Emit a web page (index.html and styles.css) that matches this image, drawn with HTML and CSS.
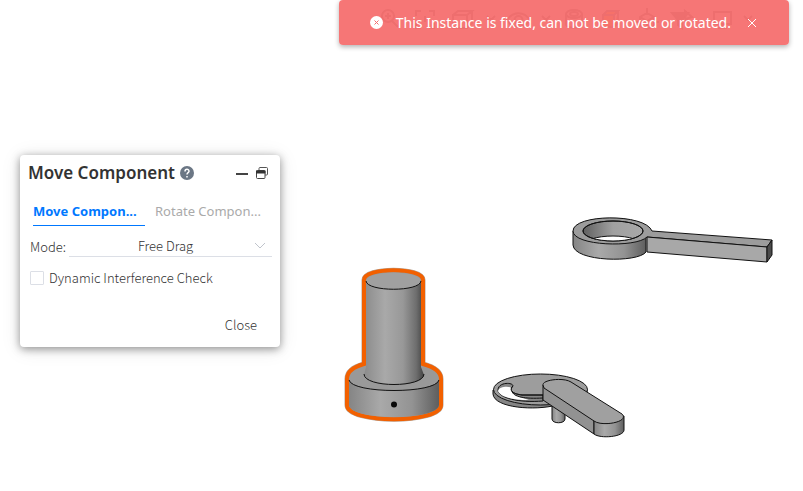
FILE: index.html
```html
<!DOCTYPE html>
<html lang="en">
<head>
<meta charset="utf-8">
<meta name="viewport" content="width=device-width, initial-scale=1">
<title>Move Component</title>
<link rel="stylesheet" href="styles.css">
</head>
<body>
<main class="workspace">
  <svg class="scene" viewBox="0 0 803 491" preserveAspectRatio="xMinYMin meet" aria-hidden="true">
    <defs>
      <linearGradient id="shaft"><stop offset="0" stop-color="#8b8b8b"/><stop offset=".35" stop-color="#a9a9a9"/><stop offset=".65" stop-color="#989898"/><stop offset=".87" stop-color="#6e6e6e"/><stop offset="1" stop-color="#424242"/></linearGradient>
      <linearGradient id="base"><stop offset="0" stop-color="#858585"/><stop offset=".35" stop-color="#a9a9a9"/><stop offset=".7" stop-color="#939393"/><stop offset="1" stop-color="#5e5e5e"/></linearGradient>
      <linearGradient id="bore"><stop offset="0" stop-color="#606060"/><stop offset=".5" stop-color="#a0a0a0"/><stop offset="1" stop-color="#a8a8a8"/></linearGradient>
      <clipPath id="hole"><ellipse cx="613" cy="231" rx="30" ry="10"/></clipPath>
    </defs>
    <!-- Selected shaft -->
    <path d="M364 364V280C364 267 423 267 423 280V364C434 367 441 372 441 379V405C441 424 347 424 347 405V379C347 372 353 367 364 364Z" fill="#999" stroke="#b5a497" stroke-width="5"/>
    <path d="M364 364V280C364 267 423 267 423 280V364C434 367 441 372 441 379V405C441 424 347 424 347 405V379C347 372 353 367 364 364Z" fill="#999" stroke="#f26000" stroke-width="4"/>
    <path d="M349 379C350 394 438 394 439 379V405C438 421 350 421 349 405Z" fill="url(#base)"/>
    <path d="M349 380C352 394 436 394 439 380" fill="none" stroke="#111"/>
    <path d="M366 280H421V367L424 375C422 388 366 388 364 375L366 367Z" fill="url(#shaft)"/>
    <path d="M364 374C364 388 424 388 424 374" fill="none" stroke="#111"/>
    <ellipse cx="393.500" cy="281" rx="27.500" ry="8.500" fill="#a0a0a0"/>
    <path d="M366 281C367 292 420 292 421 281" fill="none" stroke="#111"/>
    <circle cx="394" cy="404.500" r="3" fill="#080808"/>
    <!-- Ring wrench -->
    <g stroke="#111" stroke-linejoin="round">
      <path d="M573 231V245C574 262 638 263 646 252V237Z" fill="url(#base)"/>
      <path d="M573 231C573 214 645 213 652 231L772 240L767 247L647 237C636 248 573 246 573 231Z" fill="#9c9c9c"/>
      <path d="M647 237L767 247V262L647 252Z" fill="#a8a8a8"/>
      <path d="M767 247L772 240V255L767 262Z" fill="#4b4b4b"/>
      <ellipse cx="613" cy="231" rx="30" ry="10" fill="url(#bore)"/>
      <ellipse cx="613" cy="246" rx="30" ry="10" fill="#fff" clip-path="url(#hole)"/>
      <ellipse cx="613" cy="231" rx="30" ry="10" fill="none"/>
    </g>
    <!-- Disc lever -->
    <g stroke="#111" stroke-linejoin="round">
      <path d="M552 402V419C552 424 565 424 565 419V402Z" fill="url(#base)"/>
      <path d="M493 390V394C494 408 535 411 557 405L587 394V389Z" fill="#858585"/>
      <ellipse cx="540.500" cy="389.500" rx="47" ry="15.500" fill="#9d9d9d"/>
      <path d="M498 390C498 382 513 382 513 386C508 391 514 394 522 395H543V401C519 403 498 398 498 390Z" fill="#858585"/>
      <path d="M498 391C499 386 510 386 511 388C510 394 517 397 529 400C511 400 499 396 498 391Z" fill="#fff" stroke="none"/>
      <path d="M513 386C508 391 514 394 522 395H543M512 391C513 397 525 399 543 398" fill="none"/>
      <path d="M543 385V400L594 434V419Z" fill="#929292"/>
      <path d="M594 419V434C600 439 624 437 624 430V416Z" fill="url(#base)"/>
      <path d="M543 385C542 380 563 377 571 382L622 414C630 422 602 427 594 421L544 388Z" fill="#a0a0a0"/>
    </g>
  </svg>

  <svg class="toolbar" viewBox="0 0 388 40" aria-hidden="true">
    <g fill="none" stroke="#555" stroke-width="2">
      <circle cx="16" cy="16" r="6"/><path d="M20 21l6 6M13 16h6M16 13v6"/>
      <path d="M49 11h-5v5M57 11h5v5M44 23v5h5M62 23v5h-5M53 16v6"/>
      <path d="M81 15h14v13H81zM81 15l5-4h14l-5 4M100 11v12l-5 5"/>
      <path d="M115 16l4 4 4-4M170 16l4 4 4-4M372 16l4 4 4-4"/>
      <path d="M135 20c6-9 17-9 23 0-6 9-17 9-23 0z"/><circle cx="146.500" cy="20" r="4"/>
      <ellipse cx="202" cy="14" rx="8" ry="4"/><ellipse cx="202" cy="14" rx="4" ry="2"/><path d="M194 14v10c0 5 16 5 16 0V14"/>
      <path fill="#ff9900" d="M231 15h11v12h-11zM231 15l4-4h11l-4 4M246 11v12l-4 4"/>
      <path fill="#ff9900" stroke="none" d="M232 16h9v10h-9z"/>
      <path d="M268 17l7-4 7 4v9l-7 3-7-3zM268 17l7 4 7-4M275 21v8M275 13V8M264 22h4M282 22h5"/>
      <path fill="#666" d="M300 13h16l-6 7v8l-4-3v-5z"/><path d="M313 11l7 6-4 1-2 4z"/>
      <path d="M342 12h17v12h-17zM350 24v4M346 28h9"/>
    </g>
  </svg>

  <div class="toast" role="alert">
    <svg class="toast-icon" viewBox="0 0 13 13" aria-hidden="true"><circle cx="6.500" cy="6.500" r="6.500" fill="#fff"/><path d="M4.500 4.500l4 4m0-4l-4 4" stroke="#f56c6c"/></svg>
    <span>This Instance is fixed, can not be moved or rotated.</span>
    <button class="toast-close" type="button" aria-label="Dismiss"><svg viewBox="0 0 10 10"><path d="M1 1l8 8m0-8l-8 8" fill="none" stroke="#fff"/></svg></button>
  </div>

  <section class="panel" aria-labelledby="panel-title">
    <header class="panel-header">
      <h1 id="panel-title">Move Component</h1>
      <button class="icon-button help" type="button" aria-label="Help"><svg viewBox="0 0 14 14"><circle cx="7" cy="7" r="7" fill="#6b7785"/><path d="M5 5.500C5 2.500 9 2.700 9 5.200C9 6.800 7 6.500 7 8.500M7 10v1.500" fill="none" stroke="#fff" stroke-width="1.500"/></svg></button>
      <button class="icon-button minimize" type="button" aria-label="Minimize"><svg viewBox="0 0 14 14"><path d="M1 8h12" stroke="#444" stroke-width="2"/></svg></button>
      <button class="icon-button" type="button" aria-label="Restore"><svg viewBox="0 0 14 14"><path d="M4 4V2.500Q4 1.500 5 1.500H11.500Q12.500 1.500 12.500 2.500V8Q12.500 9 11.500 9H10" fill="none" stroke="#555"/><rect x="1.500" y="4.500" width="8.500" height="8" rx="1" fill="#fff" stroke="#444"/><path d="M1 4.500h9.500v3H1z" fill="#333"/></svg></button>
    </header>
    <div class="tabs" role="tablist">
      <button class="tab tab-active" type="button" role="tab" aria-selected="true">Move Compon...</button>
      <button class="tab" type="button" role="tab" aria-selected="false">Rotate Compon...</button>
    </div>
    <div class="field">
      <label for="mode">Mode:</label>
      <div class="select-wrap">
        <select id="mode"><option>Free Drag</option></select>
        <svg class="chevron" viewBox="0 0 12 8" aria-hidden="true"><path d="M1 1l5 5 5-5" fill="none" stroke="#c0c4cc"/></svg>
      </div>
    </div>
    <label class="check" for="interference"><input id="interference" type="checkbox">Dynamic Interference Check</label>
    <footer class="panel-footer"><button class="close" type="button">Close</button></footer>
  </section>
</main>
</body>
</html>
```
FILE: styles.css
```css
* {
  box-sizing: border-box;
}

body {
  margin: 0;
  background: #fff;
  color: #333;
  font: 300 13px/20px "Noto Sans CJK SC", "Noto Sans", sans-serif;
}

button,
select {
  padding: 0;
  border: 0;
  background: none;
  color: inherit;
  font: inherit;
}

svg {
  display: block;
}

.workspace {
  position: relative;
  min-height: 100vh;
  overflow: hidden;
}

.scene {
  width: 100%;
}

.toolbar {
  position: absolute;
  top: 0;
  right: 43px;
  width: 388px;
  opacity: 0.7;
}

.toast {
  position: absolute;
  top: 0;
  right: 14px;
  display: flex;
  align-items: center;
  padding: 12px 32px 12px 31px;
  border-radius: 4px;
  background: rgba(245, 108, 108, 0.93);
  box-shadow: 0 2px 5px rgba(0, 0, 0, 0.3);
  color: #fff;
  font: 14px/21px "Noto Sans", "Open Sans", sans-serif;
  white-space: nowrap;
}

.toast-icon {
  width: 13px;
  margin-right: 13px;
}

.toast-close {
  width: 10px;
  margin-left: 16px;
}

.panel {
  position: absolute;
  top: 155px;
  left: 20px;
  width: 260px;
  padding: 8px;
  border-radius: 4px;
  background: #fff;
  box-shadow: 0 2px 8px rgba(0, 0, 0, 0.4), 0 2px 20px rgba(0, 0, 0, 0.1);
}

.panel-header {
  display: flex;
  align-items: center;
  padding-right: 3px;
}

h1 {
  margin: 0;
  font: 600 17px/20px "Noto Sans", "Open Sans", sans-serif;
}

.icon-button {
  width: 14px;
}

.help {
  margin-left: 5px;
}

.minimize {
  margin-right: 6px;
  margin-left: auto;
}

.tabs {
  display: flex;
  gap: 10px;
  padding: 16px 3px 0 5px;
}

.tab {
  width: 112px;
  height: 27px;
  padding-bottom: 2px;
  border-bottom: 1px solid transparent;
  color: #aaa;
  font-family: "Noto Sans", "Open Sans", sans-serif;
  font-weight: 400;
  text-align: left;
  white-space: nowrap;
}

.tab-active {
  border-color: #0078ff;
  color: #0078ff;
  font-weight: 700;
}

.field {
  display: flex;
  align-items: center;
  gap: 3px;
  padding: 10px 0 0 2px;
}

.select-wrap {
  position: relative;
  flex: 1;
  border-bottom: 1px solid #dcdfe6;
}

select {
  width: 100%;
  height: 20px;
  padding: 0 10px 2px 0;
  appearance: none;
  text-align: center;
  text-align-last: center;
}

.chevron {
  position: absolute;
  top: 6px;
  right: 6px;
  width: 12px;
  pointer-events: none;
}

.check {
  display: flex;
  align-items: center;
  gap: 5px;
  padding: 11px 2px 0;
}

.check input {
  width: 14px;
  height: 14px;
  margin: 0;
  appearance: none;
  border: 1px solid #dcdfe6;
  border-radius: 1px;
}

.panel-footer {
  display: flex;
  justify-content: flex-end;
  padding: 27px 15px 4px;
}
```
